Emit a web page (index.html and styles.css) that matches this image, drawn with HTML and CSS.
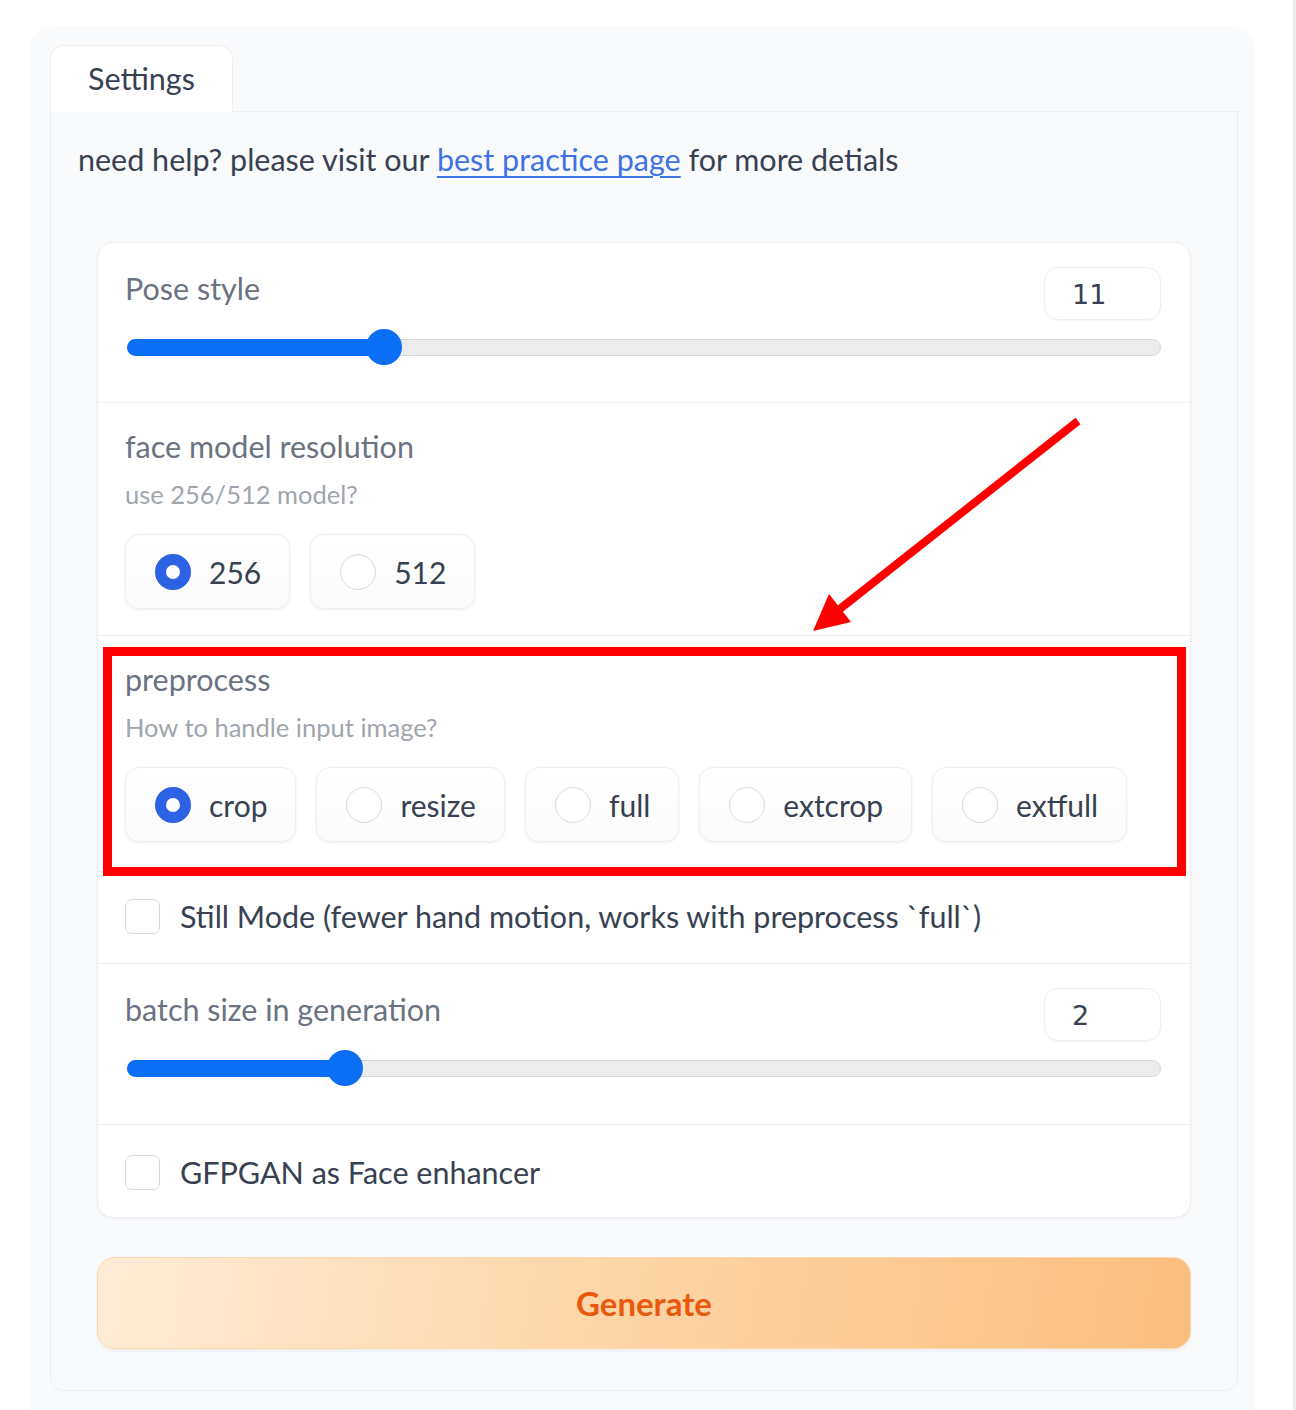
FILE: index.html
```html
<!DOCTYPE html>
<html lang="en">
<head>
<meta charset="utf-8">
<title>Settings</title>
<link rel="stylesheet" href="styles.css">
</head>
<body>
<div class="page">
  <div class="outer">
    <div class="tabs">
      <div class="tab-nav">
        <button class="tab">Settings</button>
      </div>
      <div class="tab-panel">
        <p class="help">need help? please visit our <a href="#">best practice page</a> for more detials</p>
        <div class="form">
          <div class="block">
            <div class="head">
              <span class="label">Pose style</span>
              <div class="num">11</div>
            </div>
            <div class="slider">
              <div class="track">
                <div class="fill" style="width: 24.8%"></div>
                <div class="thumb" style="left: 24.8%"></div>
              </div>
            </div>
          </div>
          <div class="block radio-block">
            <div class="label">face model resolution</div>
            <div class="info">use 256/512 model?</div>
            <div class="opts">
              <label class="opt"><span class="radio checked"></span><span>256</span></label>
              <label class="opt"><span class="radio"></span><span>512</span></label>
            </div>
          </div>
          <div class="block radio-block pre">
            <div class="label">preprocess</div>
            <div class="info">How to handle input image?</div>
            <div class="opts">
              <label class="opt"><span class="radio checked"></span><span>crop</span></label>
              <label class="opt"><span class="radio"></span><span>resize</span></label>
              <label class="opt"><span class="radio"></span><span>full</span></label>
              <label class="opt"><span class="radio"></span><span>extcrop</span></label>
              <label class="opt"><span class="radio"></span><span>extfull</span></label>
            </div>
          </div>
          <div class="block check-block still">
            <label class="check"><span class="box"></span><span>Still Mode (fewer hand motion, works with preprocess `full`)</span></label>
          </div>
          <div class="block batch">
            <div class="head">
              <span class="label">batch size in generation</span>
              <div class="num">2</div>
            </div>
            <div class="slider">
              <div class="track">
                <div class="fill" style="width: 21%"></div>
                <div class="thumb" style="left: 21%"></div>
              </div>
            </div>
          </div>
          <div class="block check-block gfp">
            <label class="check"><span class="box"></span><span>GFPGAN as Face enhancer</span></label>
          </div>
        </div>
        <button class="generate">Generate</button>
      </div>
    </div>
  </div>
  <svg class="annot" width="1296" height="1410" viewBox="0 0 1296 1410">
    <rect x="107.5" y="651.5" width="1074" height="220" fill="none" stroke="#ff0000" stroke-width="9"/>
    <line x1="1078" y1="421" x2="836" y2="612" stroke="#ff0000" stroke-width="8" stroke-linecap="butt"/>
    <polygon points="813,631 829,594 851,622" fill="#ff0000"/>
  </svg>
</div>
</body>
</html>
```
FILE: styles.css
```css
* { box-sizing: border-box; }
html, body { margin: 0; padding: 0; background: #ffffff; }
body {
  font-family: Lato, "Noto Sans", sans-serif;
  color: #374151;
}
.page {
  position: relative;
  width: 1296px;
  height: 1410px;
  overflow: hidden;
  padding: 27px 38px 0 30px;
  border-right: 3px solid #e9eaec;
}
.outer {
  background: #f9fafb;
  border-radius: 20px 20px 0 0;
  padding: 18px 17px 0 20px;
  height: 1400px;
}
.tab-nav { display: flex; }
.tab {
  width: 183px;
  height: 67px;
  margin-bottom: -1px;
  position: relative;
  z-index: 1;
  background: #ffffff;
  border: 1px solid #eceef1;
  border-bottom: none;
  border-radius: 14px 14px 0 0;
  font-family: inherit;
  font-size: 30.5px;
  color: #374151;
  text-align: left;
  padding: 0 0 2px 37px;
}
.tab-panel {
  background: #f9fafb;
  border: 1px solid #eceef1;
  border-radius: 0 0 14px 14px;
  padding: 26px 27px 41px;
}
.help {
  margin: 0;
  font-size: 30.5px;
  line-height: 43px;
  color: #374151;
}
.help a { color: #3f72e6; text-decoration: underline; text-underline-offset: 5px; text-decoration-thickness: 2px; }
.form {
  margin: 61px 19px 0;
  background: #ffffff;
  border: 1px solid #eceef1;
  border-radius: 16px;
  box-shadow: 0 1px 3px rgba(0,0,0,0.05);
  overflow: hidden;
}
.block {
  border-top: 1px solid #eef0f2;
  padding: 24px 29px 38px 27px;
}
.block:first-child { border-top: none; }
.head {
  display: flex;
  justify-content: space-between;
  align-items: flex-start;
}
.label {
  font-size: 30.5px;
  line-height: 43px;
  color: #6b7280;
}
.num {
  width: 117px;
  height: 53px;
  border: 1px solid #eceef1;
  border-radius: 14px;
  box-shadow: 0 1px 2px rgba(0,0,0,0.04);
  font-family: "DejaVu Sans", sans-serif;
  font-size: 27px;
  line-height: 51px;
  padding: 1px 0 0 27px;
  color: #374151;
}
.slider {
  margin-top: 10px;
  height: 34px;
  display: flex;
  align-items: center;
  padding-left: 2px;
}
.track {
  position: relative;
  width: 100%;
  height: 17px;
  background: #ececec;
  border: 1px solid #d6d6d6;
  border-radius: 9px;
}
.fill {
  position: absolute;
  left: -1px;
  top: -1px;
  bottom: -1px;
  background: #0b6ff5;
  border-radius: 9px 0 0 9px;
}
.thumb {
  position: absolute;
  top: 50%;
  width: 36px;
  height: 36px;
  border-radius: 50%;
  background: #0b6ff5;
  transform: translate(-50%, -50%);
}
.radio-block { padding: 22px 29px 26px 27px; }
.radio-block.pre { padding-bottom: 29px; }
.info {
  margin-top: 9px;
  font-size: 25.5px;
  line-height: 34px;
  color: #a0a5ad;
}
.opts {
  margin-top: 23px;
  display: flex;
  gap: 20px;
}
.opt {
  display: flex;
  align-items: center;
  gap: 18px;
  height: 75px;
  padding: 0 28px 0 29px;
  border: 1px solid #eceef1;
  border-radius: 14px;
  background: linear-gradient(#ffffff, #fbfbfc);
  box-shadow: 0 1px 3px rgba(0,0,0,0.07);
  font-size: 30px;
  color: #374151;
}
.radio {
  width: 36px;
  height: 36px;
  border-radius: 50%;
  border: 1.5px solid #d8dbe0;
  background: #ffffff;
  box-shadow: inset 0 1px 2px rgba(0,0,0,0.04);
  flex: none;
}
.radio.checked {
  border: 11px solid #2c62e3;
  box-shadow: none;
}
.check-block { padding: 27px 29px 29px 27px; }
.gfp { padding: 30px 29px 27px 27px; }
.batch { padding-bottom: 39px; }
.check {
  display: flex;
  align-items: center;
  gap: 20px;
  font-size: 30.5px;
  line-height: 35px;
  color: #374151;
}
.box {
  width: 35px;
  height: 35px;
  border: 1.5px solid #d8dbe0;
  border-radius: 7px;
  background: #ffffff;
  flex: none;
}
.generate {
  display: block;
  width: calc(100% - 38px);
  margin: 39px 19px 0;
  height: 92px;
  border: 1px solid #fed7aa;
  border-radius: 18px;
  background: linear-gradient(100deg, #feecd6 0%, #fed6a8 45%, #fbbd7e 100%);
  box-shadow: 0 2px 4px rgba(0,0,0,0.06);
  font-family: inherit;
  font-size: 33px;
  font-weight: 700;
  color: #e8590c;
}
.annot {
  position: absolute;
  left: 0;
  top: 0;
  pointer-events: none;
}
```
